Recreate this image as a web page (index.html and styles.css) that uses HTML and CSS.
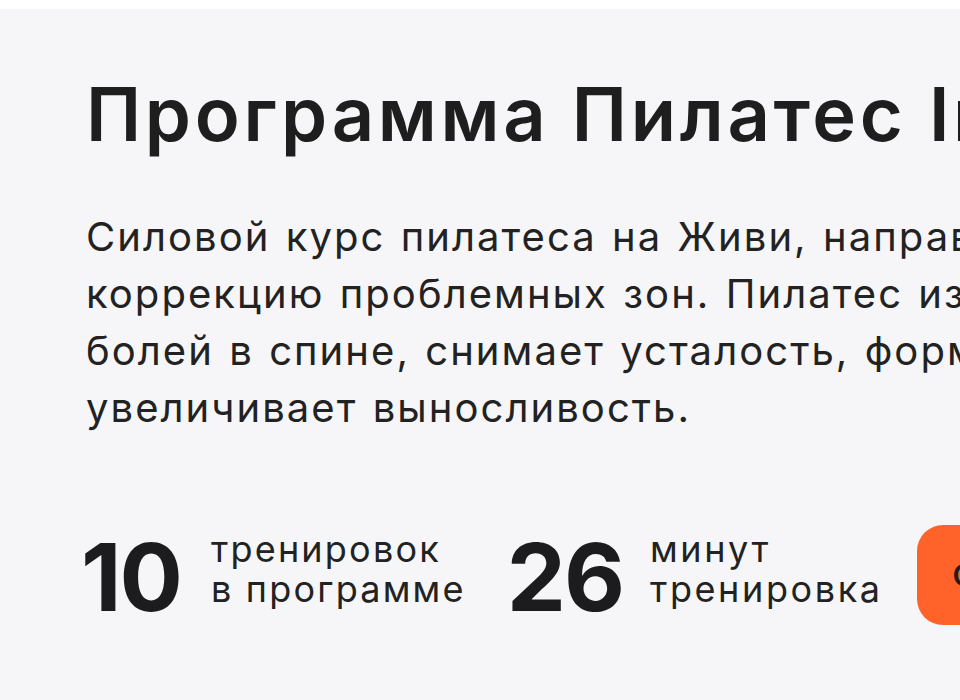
FILE: index.html
```html
<!DOCTYPE html>
<html lang="ru">
<head>
<meta charset="utf-8">
<title>Программа Пилатес Intensive</title>
<link rel="stylesheet" href="styles.css">
</head>
<body>
<section class="hero">
  <h1 class="hero-title">Программа Пилатес Intensive</h1>
  <p class="hero-text">
    <span class="line">Силовой курс пилатеса на Живи, направленный на укрепление мышц и</span>
    <span class="line">коррекцию проблемных зон. Пилатес избавляет от</span>
    <span class="line">болей в спине, снимает усталость, формирует осанку и</span>
    <span class="line">увеличивает выносливость.</span>
  </p>
  <div class="stats">
    <div class="stat stat-first">
      <span class="stat-num">10</span>
      <span class="stat-label">тренировок<br>в программе</span>
    </div>
    <div class="stat stat-second">
      <span class="stat-num">26</span>
      <span class="stat-label">минут<br>тренировка</span>
    </div>
    <a class="cta" href="#">Смотреть программу</a>
  </div>
</section>
</body>
</html>
```
FILE: styles.css
```css
html, body {
  margin: 0;
  padding: 0;
  background: #ffffff;
}

body {
  font-family: Inter, "Noto Sans", "DejaVu Sans", sans-serif;
  color: #1f1f1f;
}

.hero {
  margin-top: 9px;
  min-height: 691px;
  background: #f6f6f8;
  padding: 61px 0 0 86px;
  box-sizing: border-box;
  overflow: hidden;
}

.hero-title {
  margin: 0;
  font-size: 74px;
  line-height: 89px;
  font-weight: 600;
  letter-spacing: 3.7px;
  white-space: nowrap;
  color: #1e1e1e;
}

.hero-text {
  margin: 49px 0 0;
  font-size: 40px;
  line-height: 57px;
  font-weight: 400;
  letter-spacing: 2.05px;
  word-spacing: 2px;
  color: #222222;
}

.hero-text .line {
  display: block;
  white-space: nowrap;
}

.stats {
  display: flex;
  align-items: flex-start;
  margin-top: 89px;
  white-space: nowrap;
}

.stat {
  display: flex;
  align-items: flex-start;
}

.stat-first {
  margin-left: -5px;
}

.stat-num {
  font-size: 94px;
  line-height: 94px;
  font-weight: 700;
  margin-top: 5px;
  letter-spacing: -2px;
  color: #1c1c1e;
}

.stat-label {
  font-size: 36px;
  line-height: 40px;
  font-weight: 400;
  margin: 4px 0 0 30px;
  letter-spacing: 2.2px;
  color: #222222;
}

.stat-second {
  margin-left: 41px;
}

.stat-second .stat-label {
  margin-left: 27px;
  letter-spacing: 2.6px;
}

.cta {
  display: block;
  margin-left: 34px;
  height: 100px;
  line-height: 100px;
  padding: 0 40px 0 36px;
  border-radius: 26px;
  background: #ff632a;
  color: #1e1e1e;
  font-size: 30px;
  font-weight: 600;
  text-decoration: none;
}
```
